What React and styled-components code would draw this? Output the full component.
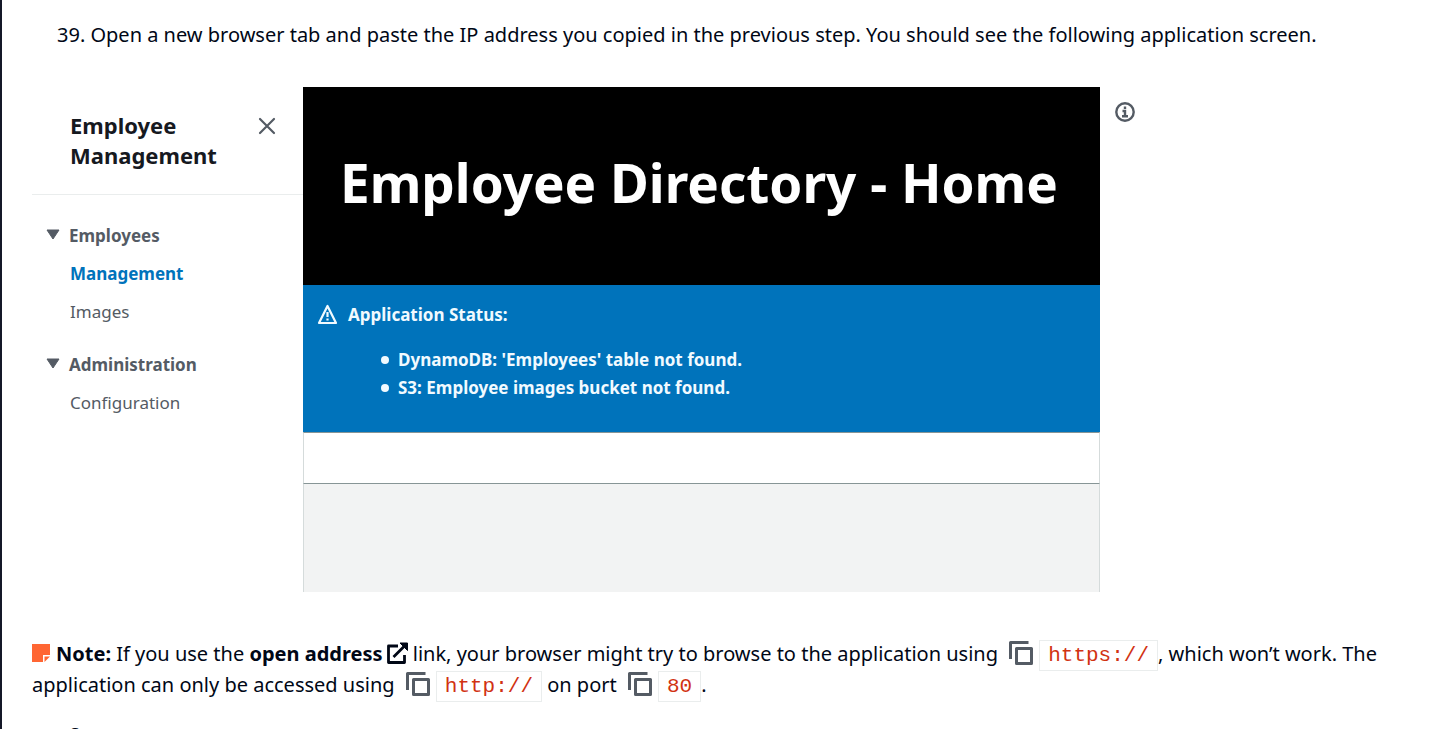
import React from 'react';
import styled, { createGlobalStyle } from 'styled-components';

const Global = createGlobalStyle`
  * { box-sizing: border-box; }
  body {
    margin: 0;
    background: #ffffff;
    color: #000716;
    font-family: "Noto Sans", "Open Sans", sans-serif;
    font-size: 20px;
    line-height: 31px;
  }
  h1, h2, h3, p, ul { margin: 0; padding: 0; }
  button { border: 0; padding: 0; background: none; color: inherit; font: inherit; cursor: pointer; }
`;

const Page = styled.main`
  height: 100vh;
  overflow: hidden;
  border-left: 2px solid #141828;
  padding: 19px 30px 0;
`;

const Step = styled.p`
  padding-left: 25px;
`;

const Shot = styled.figure`
  display: flex;
  align-items: stretch;
  margin: 37px 0 46px;
`;

const Sidebar = styled.nav`
  flex: 0 0 271px;
  color: #545b64;
`;

const SidebarHeader = styled.div`
  display: flex;
  align-items: flex-start;
  justify-content: space-between;
  height: 108px;
  padding: 23px 27px 0 38px;
  border-bottom: 1px solid #eaeded;
`;

const SidebarTitle = styled.h2`
  width: 150px;
  color: #16191f;
  font-size: 22px;
  line-height: 30px;
`;

const IconButton = styled.button`
  display: flex;
  margin-top: ${(p) => p.$top || 0}px;
  color: #545b64;
`;

const Section = styled.section`
  padding: 27px 0 0 14px;
`;

const SectionTitle = styled.button`
  display: flex;
  align-items: center;
  gap: 9px;
  height: 26px;
  font-size: 17px;
  font-weight: 700;
`;

const NavList = styled.ul`
  display: flex;
  flex-direction: column;
  gap: 12px;
  padding: 12px 0 0 24px;
  list-style: none;
`;

const NavItem = styled.li`
  height: 26px;
  line-height: 26px;
`;

const NavLink = styled.a`
  color: ${(p) => (p.$active ? '#0073bb' : '#545b64')};
  font-size: 17px;
  font-weight: ${(p) => (p.$active ? 700 : 400)};
  text-decoration: none;
`;

const AppView = styled.div`
  flex: 0 0 797px;
`;

const Hero = styled.header`
  height: 198px;
  padding: 57px 37px 0;
  background: #000000;
`;

const HeroTitle = styled.h1`
  color: #ffffff;
  font-size: 53px;
  line-height: 78px;
  white-space: nowrap;
`;

const Status = styled.section`
  height: 147px;
  padding: 16px 14px 0;
  background: #0073bb;
  color: #f1faff;
  font-size: 17px;
  font-weight: 700;
`;

const StatusTitle = styled.h3`
  display: flex;
  align-items: center;
  gap: 10px;
  font-size: 17px;
  line-height: 28px;
`;

const StatusList = styled.ul`
  padding: 17px 0 0 64px;
  line-height: 28px;
  list-style: none;
`;

const StatusItem = styled.li`
  display: flex;
  align-items: center;
  gap: 9px;

  &::before {
    content: "";
    width: 8px;
    height: 8px;
    border-radius: 50%;
    background: currentColor;
  }
`;

const Toolbar = styled.div`
  height: 52px;
  border: 1px solid #d5dbdb;
  border-top-color: #879596;
  border-bottom-color: #879596;
`;

const Canvas = styled.div`
  height: 108px;
  border: solid #d5dbdb;
  border-width: 0 1px;
  background: #f2f3f3;
`;

const Aside = styled.div`
  padding: 15px 0 0 15px;
`;

const Note = styled.p`
  line-height: 31px;
`;

const NoteIcon = styled.svg`
  margin-right: 6px;
  vertical-align: -1px;
`;

const LinkIcon = styled.svg`
  margin-left: 4px;
  vertical-align: -3px;
`;

const CopyButton = styled.button`
  display: inline-block;
  margin: 0 6px;
  line-height: 24px;
  vertical-align: -4px;

  svg { display: block; }
`;

const Code = styled.code`
  padding: 3px 8px;
  border: 1px solid #eaeded;
  color: #d13212;
  font-family: "Liberation Mono", monospace;
  font-size: 21px;
  line-height: 24px;
`;

const Heading = styled.h2`
  margin-top: 20px;
  font-size: 22px;
  line-height: 30px;
`;

function Caret() {
  return (
    <svg width="14" height="14" viewBox="0 0 14 14" aria-hidden="true">
      <path d="M1 2h12L7 11z" fill="#545b64" stroke="#545b64" strokeLinejoin="round" />
    </svg>
  );
}

function CopySnippet({ children }) {
  return (
    <>
      <CopyButton type="button" aria-label={`Copy ${children}`}>
        <svg width="24" height="24" viewBox="0 0 24 24" fill="none" stroke="#545b64" strokeWidth="3" strokeLinejoin="round">
          <path d="M1.500 18V1.500H19.500" />
          <path d="M7.500 7.500h15v15h-15z" />
        </svg>
      </CopyButton>
      <Code>{children}</Code>
    </>
  );
}

export default function App() {
  return (
    <Page>
      <Global />
      <Step>
        39. Open a new browser tab and paste the IP address you copied in the previous step. You should see the
        following application screen.
      </Step>

      <Shot>
        <Sidebar>
          <SidebarHeader>
            <SidebarTitle>Employee Management</SidebarTitle>
            <IconButton type="button" aria-label="Close" $top={7}>
              <svg width="18" height="18" viewBox="0 0 18 18" fill="none" stroke="currentColor" strokeWidth="2.200" strokeLinecap="round">
                <path d="M2 2l14 14M16 2L2 16" />
              </svg>
            </IconButton>
          </SidebarHeader>
          <Section>
            <SectionTitle type="button"><Caret />Employees</SectionTitle>
            <NavList>
              <NavItem><NavLink href="#management" $active>Management</NavLink></NavItem>
              <NavItem><NavLink href="#images">Images</NavLink></NavItem>
            </NavList>
          </Section>
          <Section>
            <SectionTitle type="button"><Caret />Administration</SectionTitle>
            <NavList>
              <NavItem><NavLink href="#configuration">Configuration</NavLink></NavItem>
            </NavList>
          </Section>
        </Sidebar>

        <AppView>
          <Hero>
            <HeroTitle>Employee Directory - Home</HeroTitle>
          </Hero>
          <Status>
            <StatusTitle>
              <svg width="21" height="22" viewBox="0 0 21 22" fill="none" stroke="currentColor" strokeWidth="2.200" aria-hidden="true">
                <path d="M10.500 2L19 19H2z" strokeLinejoin="round" />
                <path d="M10.500 8v5M10.500 14.500v2" />
              </svg>
              Application Status:
            </StatusTitle>
            <StatusList>
              <StatusItem>DynamoDB: 'Employees' table not found.</StatusItem>
              <StatusItem>S3: Employee images bucket not found.</StatusItem>
            </StatusList>
          </Status>
          <Toolbar />
          <Canvas />
        </AppView>

        <Aside>
          <IconButton type="button" aria-label="Info">
            <svg width="20" height="20" viewBox="0 0 20 20" fill="none" stroke="currentColor" strokeWidth="2.400">
              <circle cx="10" cy="10" r="8.700" />
              <path d="M10 4.500v2.500M7.500 9H10v5M7 14.300h6" />
            </svg>
          </IconButton>
        </Aside>
      </Shot>

      <Note>
        <NoteIcon width="18" height="18" viewBox="0 0 18 18" aria-hidden="true">
          <path d="M0 0h18v11h-7v7H0z" fill="#ff6633" />
          <path d="M12.500 12.500H18L12.500 18z" fill="#ff6633" />
        </NoteIcon>
        <strong>Note:</strong> If you use the <strong>open address</strong>
        <LinkIcon width="21" height="22" viewBox="0 0 21 22" fill="none" stroke="#000716" strokeWidth="2.800" strokeLinejoin="round" aria-hidden="true">
          <path d="M11 4H1.500v16.500h16V13M6.500 15L17 4.500" />
          <path d="M13 1H20.500V8.500z" fill="#000716" strokeWidth="1" />
        </LinkIcon>{' '}
        link, your browser might try to browse to the application using <CopySnippet>https://</CopySnippet>, which won’t
        work. The application can only be accessed using <CopySnippet>http://</CopySnippet> on port{' '}
        <CopySnippet>80</CopySnippet>.
      </Note>

      <Heading>Perform</Heading>
    </Page>
  );
}
